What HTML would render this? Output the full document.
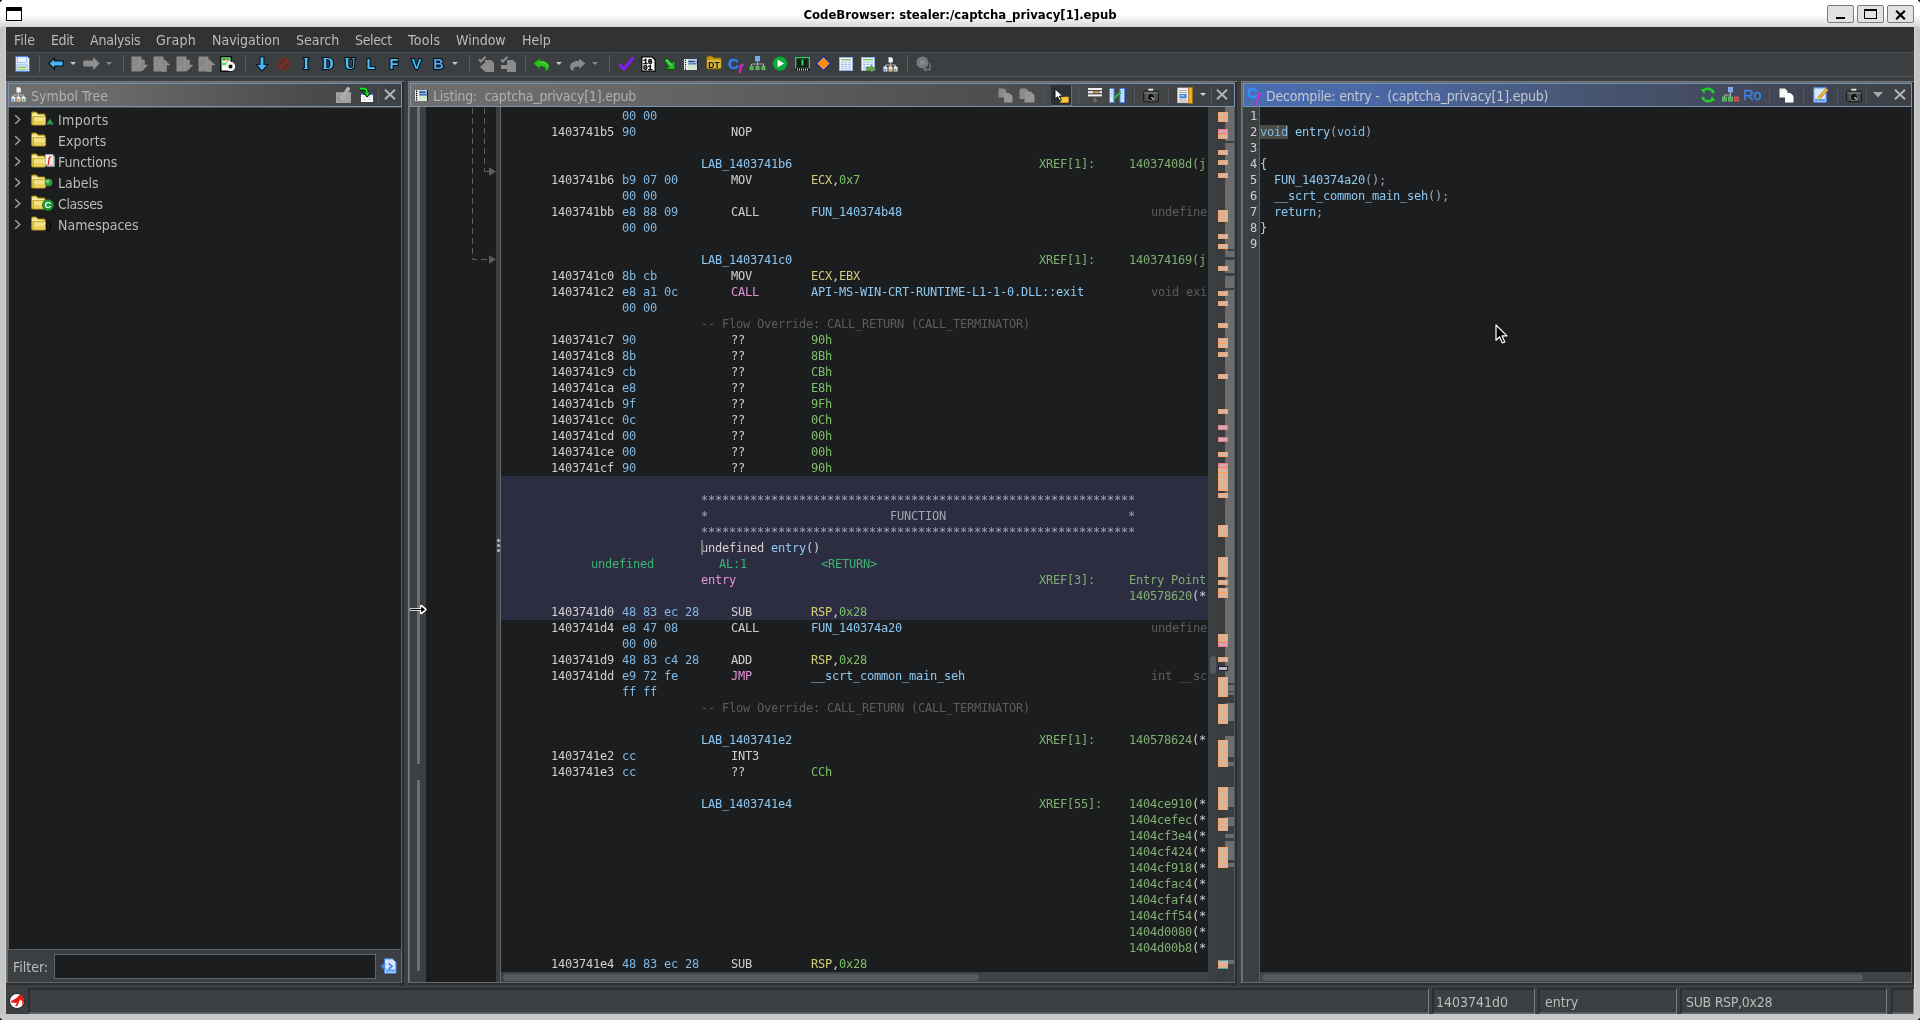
<!DOCTYPE html>
<html lang="en"><head><meta charset="utf-8"><title>CodeBrowser: stealer:/captcha_privacy[1].epub</title>
<style>
*{box-sizing:border-box;margin:0;padding:0}
html,body{width:1920px;height:1020px;overflow:hidden;background:#c8c8c8}
body{position:relative;font-family:'DejaVu Sans Condensed','DejaVu Sans','Liberation Sans',sans-serif;font-stretch:condensed;font-size:14px;color:#bbbbbb}
#root{position:absolute;left:0;top:0;width:1920px;height:1020px;overflow:hidden;will-change:transform}
.a{position:absolute}
.t{position:absolute;white-space:pre;line-height:16px}
.m{position:absolute;white-space:pre;font-family:'DejaVu Sans Mono','Liberation Mono',monospace;font-size:12px;line-height:16px;letter-spacing:-0.225px;height:16px}
.sep{position:absolute;width:1px;background:#5b5e60}
svg{position:absolute;overflow:visible}
.c-addr{color:#d0d0d0} .c-byte{color:#7fb9e6} .c-mn{color:#d0d0d0} .c-ov{color:#e193d3}
.c-reg{color:#d3cd7c} .c-sc{color:#7dbf6a} .c-lab{color:#8cc8f2} .c-xr{color:#7fae72}
.c-cm{color:#5c5c5c} .c-sep{color:#a0a4b0} .c-var{color:#3cb371} .c-fn{color:#e193d3}
.c-pl{color:#d0d0d0}
</style></head><body>
<div id="root">
<div class="a" style="left:0px;top:0px;width:1920px;height:27px;background:linear-gradient(#ffffff 0,#ffffff 15px,#d6d6d6 27px);"></div>
<div class="a" style="left:0px;top:27px;width:6px;height:993px;background:linear-gradient(90deg,#c6c6c6 0,#c6c6c6 5px,#dedede 6px);"></div>
<div class="a" style="left:1914px;top:27px;width:6px;height:993px;background:linear-gradient(90deg,#dedede 0,#c6c6c6 1px,#c6c6c6 6px);"></div>
<div class="a" style="left:0px;top:1014px;width:1920px;height:6px;background:#c8c8c8;"></div>
<div class="a" style="left:6px;top:27px;width:1908px;height:987px;background:#3c3f41;"></div>
<div class="a" style="left:0px;top:0px;width:2px;height:2px;background:radial-gradient(circle at 100% 100%,transparent 1.2px,#222 1.6px);"></div>
<div class="a" style="left:1918px;top:0px;width:2px;height:2px;background:radial-gradient(circle at 0 100%,transparent 1.2px,#222 1.6px);"></div>
<div class="a" style="left:0px;top:1018px;width:2px;height:2px;background:radial-gradient(circle at 100% 0,transparent 1.2px,#222 1.6px);"></div>
<div class="a" style="left:1918px;top:1018px;width:2px;height:2px;background:radial-gradient(circle at 0 0,transparent 1.2px,#222 1.6px);"></div>
<div class="a" style="left:6px;top:7px;width:16px;height:14px;background:#fff;border:1px solid #000;border-top:4px solid #000"></div>
<div class="t" style="left:660px;top:5px;width:600px;text-align:center;font-weight:bold;font-size:13px;color:#000;line-height:20px">CodeBrowser: stealer:/captcha_privacy[1].epub</div>
<div class="a" style="left:1827px;top:5px;width:27px;height:18px;background:#e2e2e2;border:1px solid #7c7c7c;border-radius:2px"></div>
<div class="a" style="left:1857px;top:5px;width:27px;height:18px;background:#e2e2e2;border:1px solid #7c7c7c;border-radius:2px"></div>
<div class="a" style="left:1887px;top:5px;width:27px;height:18px;background:#e2e2e2;border:1px solid #7c7c7c;border-radius:2px"></div>
<div class="a" style="left:1836px;top:17px;width:9px;height:2px;background:#000;"></div>
<div class="a" style="left:1864px;top:9px;width:13px;height:10px;border:1px solid #000;border-top:2px solid #000"></div>
<svg style="left:1895px;top:10px" width="11" height="10" viewBox="0 0 11 10"><path d="M1.2 0.8 L9.8 9.2 M9.8 0.8 L1.2 9.2" stroke="#000" stroke-width="2.2" fill="none"/></svg>
<div class="a" style="left:6px;top:27px;width:1908px;height:25px;background:#303234;"></div>
<div class="a" style="left:6px;top:52px;width:1908px;height:1px;background:#505355;"></div>
<div class="t" style="left:14px;top:30px;line-height:20px;color:#bbbbbb;letter-spacing:0px">File</div>
<div class="t" style="left:51px;top:30px;line-height:20px;color:#bbbbbb;letter-spacing:-0.4px">Edit</div>
<div class="t" style="left:90px;top:30px;line-height:20px;color:#bbbbbb;letter-spacing:-0.2px">Analysis</div>
<div class="t" style="left:156px;top:30px;line-height:20px;color:#bbbbbb;letter-spacing:0.3px">Graph</div>
<div class="t" style="left:212px;top:30px;line-height:20px;color:#bbbbbb;letter-spacing:0px">Navigation</div>
<div class="t" style="left:296px;top:30px;line-height:20px;color:#bbbbbb;letter-spacing:0px">Search</div>
<div class="t" style="left:355px;top:30px;line-height:20px;color:#bbbbbb;letter-spacing:-0.35px">Select</div>
<div class="t" style="left:408px;top:30px;line-height:20px;color:#bbbbbb;letter-spacing:0.35px">Tools</div>
<div class="t" style="left:456px;top:30px;line-height:20px;color:#bbbbbb;letter-spacing:0px">Window</div>
<div class="t" style="left:522px;top:30px;line-height:20px;color:#bbbbbb;letter-spacing:0px">Help</div>
<div class="a" style="left:6px;top:76px;width:1908px;height:1px;background:#55585a;"></div>
<svg style="left:14px;top:56px" width="16" height="16" viewBox="0 0 16 16"><path d="M1.5 0.5 H13.5 L15.5 2.5 V15.5 H1.5 Z" fill="#dfeafc" stroke="#3f78d6" stroke-width="1"/>
<rect x="3.5" y="1" width="9" height="5.5" fill="#eef4ff" stroke="#7aa5e8" stroke-width=".6"/>
<rect x="3" y="9" width="10" height="6" fill="#fff" stroke="#5a8fe0" stroke-width=".6"/>
<rect x="4" y="10.5" width="8" height="1.6" fill="#86c25a"/><rect x="4" y="12.8" width="8" height="1.4" fill="#9ccf6f"/></svg>
<div class="sep" style="left:39px;top:55px;height:18px;background:#5b5e60"></div>
<svg style="left:48px;top:57px" width="16" height="13" viewBox="0 0 16 13"><path d="M0.8 6.5 L6.5 0.8 V4 H15.2 V9 H6.5 V12.2 Z" fill="#46b6f5" stroke="#05131c" stroke-width="1.2" stroke-linejoin="round"/></svg>
<svg style="left:70px;top:62px" width="6" height="3" viewBox="0 0 6 3"><path d="M0 0 H6 L3.0 3 Z" fill="#c8c8c8"/></svg>
<svg style="left:83px;top:57px" width="17" height="13" viewBox="0 0 17 13"><path d="M16.2 6.5 L10.5 0.8 V4 H0.8 V9 H10.5 V12.2 Z" fill="#8f8f8f" stroke="#8a8a8a" stroke-width="1"/></svg>
<svg style="left:106px;top:62px" width="6" height="3" viewBox="0 0 6 3"><path d="M0 0 H6 L3.0 3 Z" fill="#8a8a8a"/></svg>
<div class="sep" style="left:123px;top:55px;height:18px;background:#5b5e60"></div>
<svg style="left:131px;top:56px" width="17" height="16" viewBox="0 0 17 16"><path d="M0.5 0.5 H10.5 V15.5 H0.5 Z" fill="#8d8d8d"/><path d="M2.5 4h3M2.5 6.5h2M2.5 9h2" stroke="#7c7c7c" stroke-width="1"/><path d="M7 1 L4.5 7 L8 9.5 L6 15" stroke="#808080" stroke-width=".8" fill="none"/><path d="M9 4 H13.5 V9 H16.8 L11.3 14.8 L5.8 9 H9 Z" fill="#8a8a8a" stroke="#9a9a9a" stroke-width=".5"/></svg>
<svg style="left:153px;top:56px" width="17" height="16" viewBox="0 0 17 16"><path d="M0.5 0.5 H10.5 V15.5 H0.5 Z" fill="#8d8d8d"/><path d="M2.5 4h3M2.5 6.5h2M2.5 9h2" stroke="#7c7c7c" stroke-width="1"/><path d="M7 1 L4.5 7 L8 9.5 L6 15" stroke="#808080" stroke-width=".8" fill="none"/><path d="M9 15.4 H13.5 V9 H16.8 L11.3 3.4 L5.8 9 H9 Z" fill="#8a8a8a" stroke="#9a9a9a" stroke-width=".5"/></svg>
<svg style="left:176px;top:56px" width="17" height="16" viewBox="0 0 17 16"><path d="M0.5 0.5 H10.5 V15.5 H0.5 Z" fill="#8d8d8d"/><path d="M2.5 4h3M2.5 6.5h2M2.5 9h2" stroke="#7c7c7c" stroke-width="1"/><path d="M7 1 L4.5 7 L8 9.5 L6 15" stroke="#808080" stroke-width=".8" fill="none"/><path d="M9 4 H13.5 V9 H16.8 L11.3 14.8 L5.8 9 H9 Z" fill="#8a8a8a" stroke="#9a9a9a" stroke-width=".5"/></svg>
<svg style="left:198px;top:56px" width="17" height="16" viewBox="0 0 17 16"><path d="M0.5 0.5 H10.5 V15.5 H0.5 Z" fill="#8d8d8d"/><path d="M2.5 4h3M2.5 6.5h2M2.5 9h2" stroke="#7c7c7c" stroke-width="1"/><path d="M7 1 L4.5 7 L8 9.5 L6 15" stroke="#808080" stroke-width=".8" fill="none"/><path d="M9 15.4 H13.5 V9 H16.8 L11.3 3.4 L5.8 9 H9 Z" fill="#8a8a8a" stroke="#9a9a9a" stroke-width=".5"/></svg>
<svg style="left:220px;top:56px" width="16" height="16" viewBox="0 0 16 16"><rect x="0.8" y="0.8" width="10.4" height="14.4" fill="#fff" stroke="#000" stroke-width="1.4"/>
<rect x="1.5" y="1.5" width="9" height="3" fill="#4fc84f"/><rect x="1.5" y="6.5" width="6" height="3" fill="#6bd66b"/>
<rect x="3" y="3" width="2" height="1.5" fill="#d04040"/><rect x="6.5" y="4.5" width="2" height="1.2" fill="#d08040"/>
<circle cx="10.5" cy="10.5" r="4" fill="#e8e8e8" stroke="#fff" stroke-width="1.4"/><rect x="8.8" y="8.8" width="3.4" height="3.4" fill="#111"/></svg>
<div class="sep" style="left:245px;top:55px;height:18px;background:#5b5e60"></div>
<svg style="left:255px;top:56px" width="14" height="16" viewBox="0 0 14 16"><path d="M5 0.8 H9 V8.5 H12.8 L7 15.2 L1.2 8.5 H5 Z" fill="#46b6f5" stroke="#05131c" stroke-width="1.1" stroke-linejoin="round"/></svg>
<svg style="left:277px;top:57px" width="14" height="14" viewBox="0 0 14 14"><circle cx="7" cy="7" r="6.6" fill="#6e2d28"/><circle cx="7" cy="7" r="4.2" fill="#55302e"/><path d="M3.2 10.8 L10.8 3.2" stroke="#7a332d" stroke-width="2.4"/></svg>
<svg style="left:300px;top:54px" width="12" height="20" viewBox="0 0 12 20"><text x="6.0" y="14.799999999999997" text-anchor="middle" font-family="'Liberation Serif','DejaVu Serif',serif" font-weight="bold" font-size="16" fill="#4dc0f8" stroke="#020a10" stroke-width="2" paint-order="stroke" stroke-linejoin="round">I</text></svg>
<svg style="left:321px;top:54px" width="14" height="20" viewBox="0 0 14 20"><text x="7.0" y="14.799999999999997" text-anchor="middle" font-family="'Liberation Serif','DejaVu Serif',serif" font-weight="bold" font-size="16" fill="#4dc0f8" stroke="#020a10" stroke-width="2" paint-order="stroke" stroke-linejoin="round">D</text></svg>
<svg style="left:343px;top:54px" width="14" height="20" viewBox="0 0 14 20"><text x="7.0" y="14.799999999999997" text-anchor="middle" font-family="'Liberation Serif','DejaVu Serif',serif" font-weight="bold" font-size="16" fill="#4dc0f8" stroke="#020a10" stroke-width="2" paint-order="stroke" stroke-linejoin="round">U</text></svg>
<svg style="left:365px;top:54px" width="12" height="20" viewBox="0 0 12 20"><text x="6.0" y="14.799999999999997" text-anchor="middle" font-family="'Liberation Sans','DejaVu Sans',sans-serif" font-weight="bold" font-size="14.5" fill="#4dc0f8" stroke="#020a10" stroke-width="2" paint-order="stroke" stroke-linejoin="round">L</text></svg>
<svg style="left:388px;top:54px" width="12" height="20" viewBox="0 0 12 20"><text x="6.0" y="14.799999999999997" text-anchor="middle" font-family="'Liberation Sans','DejaVu Sans',sans-serif" font-weight="bold" font-size="14.5" fill="#4dc0f8" stroke="#020a10" stroke-width="2" paint-order="stroke" stroke-linejoin="round">F</text></svg>
<svg style="left:410px;top:54px" width="13" height="20" viewBox="0 0 13 20"><text x="6.5" y="14.799999999999997" text-anchor="middle" font-family="'Liberation Sans','DejaVu Sans',sans-serif" font-weight="bold" font-size="14.5" fill="#28c4ff" stroke="#020a10" stroke-width="2" paint-order="stroke" stroke-linejoin="round">V</text></svg>
<svg style="left:432px;top:54px" width="13" height="20" viewBox="0 0 13 20"><text x="6.5" y="14.799999999999997" text-anchor="middle" font-family="'Liberation Sans','DejaVu Sans',sans-serif" font-weight="bold" font-size="14.5" fill="#58a8f0" stroke="#020a10" stroke-width="2" paint-order="stroke" stroke-linejoin="round">B</text></svg>
<svg style="left:452px;top:62px" width="6" height="3" viewBox="0 0 6 3"><path d="M0 0 H6 L3.0 3 Z" fill="#c8c8c8"/></svg>
<div class="sep" style="left:469px;top:55px;height:18px;background:#5b5e60"></div>
<svg style="left:478px;top:56px" width="17" height="16" viewBox="0 0 17 16"><path d="M7 4 H13 L16 7 V16 H7 Z" fill="#8a8a8a"/><path d="M1 3.5 L3 5.5 L7.5 0.8" stroke="#8c8c8c" stroke-width="2" fill="none"/><path d="M2 11 L7 6.5 V9 H12 V13 H7 V15.5 Z" fill="#909090"/></svg>
<svg style="left:500px;top:56px" width="17" height="16" viewBox="0 0 17 16"><path d="M7 4 H13 L16 7 V16 H7 Z" fill="#8a8a8a"/><path d="M1 3.5 L3 5.5 L7.5 0.8" stroke="#8c8c8c" stroke-width="2" fill="none"/><path d="M12 11 L7 6.5 V9 H1 V13 H7 V15.5 Z" fill="#909090"/></svg>
<div class="sep" style="left:525px;top:55px;height:18px;background:#5b5e60"></div>
<svg style="left:533px;top:58px" width="17" height="14" viewBox="0 0 17 14"><path d="M0.6 5.6 L6.8 0.6 V3 C11.5 2.4 16 4.8 16 9 C16 11.4 14.2 12.8 11.6 13 C13.6 11.6 13.4 8.6 6.8 8.2 V10.8 Z" fill="#2cc21e" stroke="#13800c" stroke-width=".8" stroke-linejoin="round"/><path d="M7 4 C11 3.6 14.6 5.6 14.8 8.6" stroke="#7be86e" stroke-width="1" fill="none"/></svg>
<svg style="left:556px;top:62px" width="6" height="3" viewBox="0 0 6 3"><path d="M0 0 H6 L3.0 3 Z" fill="#c8c8c8"/></svg>
<svg style="left:569px;top:58px" width="17" height="14" viewBox="0 0 17 14"><path d="M16.4 5.6 L10.2 0.6 V3 C5.5 2.4 1 4.8 1 9 C1 11.4 2.8 12.8 5.4 13 C3.4 11.6 3.6 8.6 10.2 8.2 V10.8 Z" fill="#8a8a8a"/></svg>
<svg style="left:592px;top:62px" width="6" height="3" viewBox="0 0 6 3"><path d="M0 0 H6 L3.0 3 Z" fill="#8a8a8a"/></svg>
<div class="sep" style="left:609px;top:55px;height:18px;background:#5b5e60"></div>
<svg style="left:618px;top:56px" width="16" height="16" viewBox="0 0 16 16"><path d="M2 8.8 L6 13 L14.6 2.4" stroke="#8a1af0" stroke-width="3" fill="none" stroke-linecap="round" stroke-linejoin="round"/></svg>
<svg style="left:641px;top:56px" width="15" height="16" viewBox="0 0 15 16"><path d="M0.8 0.8 H11 L14.2 4 V15.2 H0.8 Z" fill="#fff" stroke="#000" stroke-width="1.3"/><text x="2" y="7.8" font-family="'Liberation Mono',monospace" font-weight="bold" font-size="8" fill="#000" stroke="#000" stroke-width=".4" textLength="9.5" lengthAdjust="spacingAndGlyphs">10</text><text x="2" y="14" font-family="'Liberation Mono',monospace" font-weight="bold" font-size="8" fill="#000" stroke="#000" stroke-width=".4" textLength="9.5" lengthAdjust="spacingAndGlyphs">01</text></svg>
<svg style="left:663px;top:57px" width="14" height="14" viewBox="0 0 14 14"><path d="M1 3.8 L4 0.9 L9.2 6 L12 3.2 V12.6 H2.6 L5.6 9.6 Z" fill="#2cb52c" stroke="#0c4f0c" stroke-width="1" stroke-linejoin="round"/><path d="M3.5 3 L9 8.6" stroke="#8ff08f" stroke-width="1"/></svg>
<svg style="left:684px;top:59px" width="14" height="11" viewBox="0 0 14 11"><rect x="0" y="0" width="14" height="11" fill="#e9eef2"/><rect x="4" y="0.5" width="9.5" height="4" fill="#9bb6d8"/><rect x="4" y="5.5" width="9.5" height="5" fill="#cfe6cf"/><rect x="4.5" y="2" width="6" height="1" fill="#1c3a78"/><rect x="4.5" y="4.4" width="8" height="1" fill="#31508c"/><path d="M1.5 1.2v0M1.5 3.4v0M1.5 5.6v0M1.5 7.8v0M1.5 10v0" stroke="#000" stroke-width="1.3" stroke-linecap="round"/><rect x="13" y="0" width="1" height="11" fill="#222"/></svg>
<svg style="left:706px;top:55px" width="16" height="15" viewBox="0 0 16 15"><path d="M0.7 2.5 Q0.7 1 2.2 1 H6 L7.6 2.8 H14 Q15.3 2.8 15.3 4.2 V12.8 Q15.3 14 14 14 H2 Q0.7 14 0.7 12.8 Z" fill="#c09a18" stroke="#6e5606" stroke-width=".9"/><path d="M1.2 5 H14.8 V12.8 H1.2 Z" fill="#d9ba3a"/><text x="8" y="12.6" text-anchor="middle" font-family="'Liberation Sans',sans-serif" font-weight="bold" font-size="8.5" fill="#111">DT</text></svg>
<div class="a" style="left:728px;top:55px;width:12px;height:18px;line-height:18px;font-family:'Liberation Sans',sans-serif;font-weight:bold;font-size:15px;color:#2f7df2;-webkit-text-stroke:.5px #2f7df2">C</div>
<div class="a" style="left:739px;top:59px;width:8px;height:16px;line-height:16px;font-family:'Liberation Serif',serif;font-weight:bold;font-style:italic;font-size:11px;color:#f020e0;-webkit-text-stroke:.4px #f020e0">f</div>
<svg style="left:749px;top:56px" width="17" height="15" viewBox="0 0 17 15"><path d="M8.5 5 V8 M2.5 10.5 V8 H14.5 V10.5 M8.5 8 V10.5" stroke="#a8a8a8" stroke-width="1" fill="none"/><rect x="6.3" y="0.5" width="4.4" height="4.4" fill="#6ea8f0" stroke="#9cc4f8" stroke-width=".6"/><rect x="1" y="10.6" width="3.2" height="3.2" fill="#44b044" stroke="#7fd07f" stroke-width=".6"/><rect x="6.9" y="10.6" width="3.2" height="3.2" fill="#44b044" stroke="#7fd07f" stroke-width=".6"/><rect x="12.8" y="10.6" width="3.2" height="3.2" fill="#44b044" stroke="#7fd07f" stroke-width=".6"/></svg>
<svg style="left:772px;top:56px" width="16" height="16" viewBox="0 0 16 16"><circle cx="8" cy="7.6" r="7.2" fill="#11a83a" stroke="#0b7a28" stroke-width=".8"/><path d="M5.6 3.6 L12 7.6 L5.6 11.6 Z" fill="#fff"/></svg>
<svg style="left:795px;top:57px" width="15" height="14" viewBox="0 0 15 14"><rect x="0.7" y="0.7" width="13.6" height="10.6" fill="#0d0d0d" stroke="#2adf6a" stroke-width="1.2"/><rect x="2.6" y="2.6" width="3.6" height="6" fill="#1a1a1a" stroke="#3a3a3a" stroke-width=".5"/><rect x="8.8" y="2.6" width="3.6" height="6" fill="#1a1a1a" stroke="#3a3a3a" stroke-width=".5"/><rect x="6.6" y="2.5" width="1.8" height="6" fill="#2adf6a"/><rect x="0.5" y="11" width="14" height="2.6" fill="#111"/><path d="M2.5 11.5v2M4.5 11.5v2M6.5 11.5v2M8.5 11.5v2M10.5 11.5v2M12.5 11.5v2" stroke="#e8e8e8" stroke-width=".9"/></svg>
<svg style="left:816px;top:56px" width="15" height="15" viewBox="0 0 15 15"><path d="M7.5 0.6 L14.4 7.5 L7.5 14.4 L0.6 7.5 Z" fill="#ff8a00" stroke="#1a2a9a" stroke-width="1.2"/><path d="M7.5 1.9 L13.1 7.5 L7.5 13.1 L1.9 7.5 Z" fill="none" stroke="#c9c9e8" stroke-width=".5"/></svg>
<svg style="left:839px;top:57px" width="14" height="14" viewBox="0 0 14 14"><rect x="0.5" y="0.5" width="13" height="13" fill="#f4f8ff" stroke="#8fb0e0" stroke-width="1"/><rect x="2" y="2" width="10" height="1.4" fill="#7fc060"/><path d="M2 5.2h10M2 7.4h10M2 9.6h10M2 11.8h10" stroke="#9bb8e6" stroke-width="1.1"/><path d="M5.2 4.4v8M8.8 4.4v8" stroke="#f4f8ff" stroke-width=".8"/></svg>
<svg style="left:861px;top:57px" width="14" height="14" viewBox="0 0 14 14"><rect x="0.5" y="0.5" width="13" height="13" fill="#f4f8ff" stroke="#8fb0e0" stroke-width="1"/><rect x="2" y="2" width="10" height="1.4" fill="#7fc060"/><path d="M2 5.2h10M2 7.4h10M2 9.6h10M2 11.8h10" stroke="#9bb8e6" stroke-width="1.1"/><path d="M5.2 4.4v8M8.8 4.4v8" stroke="#f4f8ff" stroke-width=".8"/></svg>
<svg style="left:866px;top:65px" width="10" height="8" viewBox="0 0 10 8"><path d="M0.5 2.4 H5 V0.4 L9.6 4 L5 7.6 V5.6 H0.5 Z" fill="#6aa84a" stroke="#3f7a24" stroke-width=".7"/></svg>
<svg style="left:883px;top:57px" width="15" height="15" viewBox="0 0 15 15"><path d="M7.5 5.5 V8 M2.5 10 V8 H12.5 V10 M7.5 8 V10" stroke="#b8b8b8" stroke-width="1" fill="none"/><path d="M5.5 0.3 H8.6 L9.8 1.5 V5.4 H5.5 Z" fill="#f4f4f4"/><path d="M0.5 9.6 H3.4 L4.4 10.6 V14.6 H0.5 Z" fill="#f4f4f4"/><path d="M5.6 9.6 H8.5 L9.5 10.6 V14.6 H5.6 Z" fill="#f4f4f4"/><path d="M10.7 9.6 H13.6 L14.6 10.6 V14.6 H10.7 Z" fill="#f4f4f4"/><rect x="1.3" y="11.6" width="2" height="2.4" fill="#5a9ae8"/><rect x="6.4" y="11.6" width="2" height="2.4" fill="#f08a3c"/><rect x="11.5" y="11.6" width="2" height="2.4" fill="#48c048"/></svg>
<div class="sep" style="left:907px;top:55px;height:18px;background:#5b5e60"></div>
<svg style="left:916px;top:56px" width="16" height="16" viewBox="0 0 16 16"><circle cx="6.5" cy="6.5" r="6" fill="#777a7c"/><path d="M4.6 3.2 L10 6.5 L4.6 9.8 Z" fill="#8a8d8f"/><path d="M8 13.5 H14 V7" stroke="#777a7c" stroke-width="1.3" fill="none"/><path d="M9.8 11.4 L7.2 13.5 L9.8 15.6 Z" fill="#777a7c"/></svg>
<div class="a" style="left:6px;top:81px;width:398px;height:904px;background:#3c3f41;"></div>
<div class="a" style="left:6px;top:81px;width:398px;height:2px;background:linear-gradient(#747a7d 0,#747a7d 1px,#62676a 1px,#62676a 2px);"></div>
<div class="a" style="left:6px;top:81px;width:2px;height:904px;background:linear-gradient(90deg,#747a7d 0,#747a7d 1px,#62676a 1px,#62676a 2px);"></div>
<div class="a" style="left:402px;top:82px;width:2px;height:903px;background:#2b2d2f;"></div>
<div class="a" style="left:6px;top:983px;width:398px;height:2px;background:#2b2d2f;"></div>
<div class="a" style="left:8px;top:83px;width:394px;height:24px;border:1px solid #7a93b0;background:linear-gradient(90deg,#6e6e6e 0,#6a6a6a 25%,#4a4c4e 75%,#3d4042 100%)"></div>
<svg style="left:11px;top:87px" width="15" height="15" viewBox="0 0 15 15"><path d="M7.5 5.5 V8 M2.5 10 V8 H12.5 V10 M7.5 8 V10" stroke="#b8b8b8" stroke-width="1" fill="none"/><path d="M5.5 0.3 H8.6 L9.8 1.5 V5.4 H5.5 Z" fill="#f4f4f4"/><path d="M0.5 9.6 H3.4 L4.4 10.6 V14.6 H0.5 Z" fill="#f4f4f4"/><path d="M5.6 9.6 H8.5 L9.5 10.6 V14.6 H5.6 Z" fill="#f4f4f4"/><path d="M10.7 9.6 H13.6 L14.6 10.6 V14.6 H10.7 Z" fill="#f4f4f4"/><rect x="1.3" y="11.6" width="2" height="2.4" fill="#5a9ae8"/><rect x="6.4" y="11.6" width="2" height="2.4" fill="#f08a3c"/><rect x="11.5" y="11.6" width="2" height="2.4" fill="#48c048"/></svg>
<div class="t" style="left:31px;top:88px;color:#b0b0b0">Symbol Tree</div>
<svg style="left:336px;top:86px" width="16" height="18" viewBox="0 0 16 18"><rect x="0" y="6.2" width="15" height="10.8" fill="#a2a2a2"/><path d="M5.5 13.5 L12.2 2.8" stroke="#b4b4b4" stroke-width="3.6" stroke-linecap="round"/><path d="M6.5 12 L11.5 4" stroke="#8e8e8e" stroke-width=".8" stroke-dasharray="1.2 1"/><path d="M2.5 11 V14.2 H6.5" stroke="#8a8a8a" stroke-width="1" fill="none"/></svg>
<svg style="left:359px;top:86px" width="16" height="17" viewBox="0 0 16 17"><rect x="2" y="8" width="12" height="8" fill="#fdfdfd"/><rect x="2" y="7.6" width="12" height="1.3" fill="#3a8af0"/><path d="M3.5 11h3.5M8.5 11h4M3.5 13.6h3.5M8.5 13.6h4" stroke="#cfcfcf" stroke-width="1"/><path d="M0.5 3.4 H5.2 Q8.2 3.4 8.2 7" stroke="#000" stroke-width="2.8" fill="none"/><path d="M3.8 6.8 H12.4 L8.1 11.6 Z" fill="#000"/><path d="M0.5 2.8 H5.2 Q8 2.8 8 6.4" stroke="#12e812" stroke-width="1.9" fill="none"/><path d="M5 6.4 H11.2 L8.1 10.2 Z" fill="#12e812"/></svg>
<div class="sep" style="left:378px;top:86px;height:18px;background:#55585a"></div>
<svg style="left:384px;top:89px" width="12" height="11" viewBox="0 0 12 11"><path d="M1 0.8 L11 10.2 M11 0.8 L1 10.2" stroke="#b4b4b4" stroke-width="2" fill="none"/></svg>
<div class="a" style="left:9px;top:108px;width:392px;height:841px;background:#1c1d1e;"></div>
<div class="a" style="left:401px;top:107px;width:1px;height:843px;background:#5f6365;"></div>
<div class="a" style="left:8px;top:107px;width:1px;height:843px;background:#666a6c;"></div>
<div class="a" style="left:9px;top:107px;width:392px;height:1px;background:#4c4f51;"></div>
<div class="a" style="left:8px;top:949px;width:394px;height:1px;background:#5f6365;"></div>
<svg style="left:14px;top:114px" width="7" height="11" viewBox="0 0 7 11"><path d="M1.2 1.2 L5.8 5.5 L1.2 9.8" stroke="#b0b0b0" stroke-width="1.2" fill="none"/></svg>
<svg style="left:31px;top:111px" width="16" height="15" viewBox="0 0 16 15"><path d="M0.6 2.2 Q0.6 1 1.8 1 H5.4 L7.2 3 H13 Q14 3 14 4 V13 Q14 14 13 14 H1.8 Q0.6 14 0.6 13 Z" fill="#e6cf55" stroke="#a8880e" stroke-width=".9"/><path d="M1.2 2.4 H5.2 L6.8 4 H13.2 V5 H1.2 Z" fill="#f7ecaa"/><path d="M2.4 5.6 H14.6 V13 Q14.6 13.8 13.8 13.8 H3.2 Q2.4 13.8 2.4 13 Z" fill="#f3e387" stroke="#b8981c" stroke-width=".7"/><path d="M3 10 H14 V13.2 H3 Z" fill="#ead25c"/></svg>
<svg style="left:46px;top:118px" width="8" height="7" viewBox="0 0 8 7"><path d="M4 0.4 L7.6 6.6 H0.4 Z" fill="#2e9a50"/></svg>
<div class="t" style="left:58px;top:110px;line-height:20px;color:#bbbbbb;letter-spacing:0.33px">Imports</div>
<svg style="left:14px;top:135px" width="7" height="11" viewBox="0 0 7 11"><path d="M1.2 1.2 L5.8 5.5 L1.2 9.8" stroke="#b0b0b0" stroke-width="1.2" fill="none"/></svg>
<svg style="left:31px;top:132px" width="16" height="15" viewBox="0 0 16 15"><path d="M0.6 2.2 Q0.6 1 1.8 1 H5.4 L7.2 3 H13 Q14 3 14 4 V13 Q14 14 13 14 H1.8 Q0.6 14 0.6 13 Z" fill="#e6cf55" stroke="#a8880e" stroke-width=".9"/><path d="M1.2 2.4 H5.2 L6.8 4 H13.2 V5 H1.2 Z" fill="#f7ecaa"/><path d="M2.4 5.6 H14.6 V13 Q14.6 13.8 13.8 13.8 H3.2 Q2.4 13.8 2.4 13 Z" fill="#f3e387" stroke="#b8981c" stroke-width=".7"/><path d="M3 10 H14 V13.2 H3 Z" fill="#ead25c"/></svg>
<div class="t" style="left:58px;top:131px;line-height:20px;color:#bbbbbb;letter-spacing:0.1px">Exports</div>
<svg style="left:14px;top:156px" width="7" height="11" viewBox="0 0 7 11"><path d="M1.2 1.2 L5.8 5.5 L1.2 9.8" stroke="#b0b0b0" stroke-width="1.2" fill="none"/></svg>
<svg style="left:31px;top:153px" width="16" height="15" viewBox="0 0 16 15"><path d="M0.6 2.2 Q0.6 1 1.8 1 H5.4 L7.2 3 H13 Q14 3 14 4 V13 Q14 14 13 14 H1.8 Q0.6 14 0.6 13 Z" fill="#e6cf55" stroke="#a8880e" stroke-width=".9"/><path d="M1.2 2.4 H5.2 L6.8 4 H13.2 V5 H1.2 Z" fill="#f7ecaa"/><path d="M2.4 5.6 H14.6 V13 Q14.6 13.8 13.8 13.8 H3.2 Q2.4 13.8 2.4 13 Z" fill="#f3e387" stroke="#b8981c" stroke-width=".7"/><path d="M3 10 H14 V13.2 H3 Z" fill="#ead25c"/></svg>
<svg style="left:45px;top:154px" width="10" height="13" viewBox="0 0 10 13"><rect x="2" y="2" width="7.5" height="10.5" fill="#d8d8d8" stroke="#9a9a9a" stroke-width=".6"/><rect x="0.5" y="0.5" width="7.5" height="10.5" fill="#fafafa" stroke="#b0b0b0" stroke-width=".6"/><text x="2.4" y="9" font-family="'Liberation Serif',serif" font-style="italic" font-weight="bold" font-size="10" fill="#e01818">f</text></svg>
<div class="t" style="left:58px;top:152px;line-height:20px;color:#bbbbbb;letter-spacing:-0.1px">Functions</div>
<svg style="left:14px;top:177px" width="7" height="11" viewBox="0 0 7 11"><path d="M1.2 1.2 L5.8 5.5 L1.2 9.8" stroke="#b0b0b0" stroke-width="1.2" fill="none"/></svg>
<svg style="left:31px;top:174px" width="16" height="15" viewBox="0 0 16 15"><path d="M0.6 2.2 Q0.6 1 1.8 1 H5.4 L7.2 3 H13 Q14 3 14 4 V13 Q14 14 13 14 H1.8 Q0.6 14 0.6 13 Z" fill="#e6cf55" stroke="#a8880e" stroke-width=".9"/><path d="M1.2 2.4 H5.2 L6.8 4 H13.2 V5 H1.2 Z" fill="#f7ecaa"/><path d="M2.4 5.6 H14.6 V13 Q14.6 13.8 13.8 13.8 H3.2 Q2.4 13.8 2.4 13 Z" fill="#f3e387" stroke="#b8981c" stroke-width=".7"/><path d="M3 10 H14 V13.2 H3 Z" fill="#ead25c"/></svg>
<svg style="left:44px;top:178px" width="9" height="9" viewBox="0 0 9 9"><circle cx="4.5" cy="4.5" r="3.8" fill="#2fa03a"/><circle cx="3.6" cy="3.4" r="1.6" fill="#7fd487"/></svg>
<div class="t" style="left:58px;top:173px;line-height:20px;color:#bbbbbb;letter-spacing:0px">Labels</div>
<svg style="left:14px;top:198px" width="7" height="11" viewBox="0 0 7 11"><path d="M1.2 1.2 L5.8 5.5 L1.2 9.8" stroke="#b0b0b0" stroke-width="1.2" fill="none"/></svg>
<svg style="left:31px;top:195px" width="16" height="15" viewBox="0 0 16 15"><path d="M0.6 2.2 Q0.6 1 1.8 1 H5.4 L7.2 3 H13 Q14 3 14 4 V13 Q14 14 13 14 H1.8 Q0.6 14 0.6 13 Z" fill="#e6cf55" stroke="#a8880e" stroke-width=".9"/><path d="M1.2 2.4 H5.2 L6.8 4 H13.2 V5 H1.2 Z" fill="#f7ecaa"/><path d="M2.4 5.6 H14.6 V13 Q14.6 13.8 13.8 13.8 H3.2 Q2.4 13.8 2.4 13 Z" fill="#f3e387" stroke="#b8981c" stroke-width=".7"/><path d="M3 10 H14 V13.2 H3 Z" fill="#ead25c"/></svg>
<svg style="left:42px;top:199px" width="12" height="12" viewBox="0 0 12 12"><circle cx="6" cy="6" r="5.6" fill="#1e9a38" stroke="#0d6a22" stroke-width=".6"/><text x="6" y="9.3" text-anchor="middle" font-family="'Liberation Sans',sans-serif" font-weight="bold" font-size="9.5" fill="#fff">C</text></svg>
<div class="t" style="left:58px;top:194px;line-height:20px;color:#bbbbbb;letter-spacing:-0.4px">Classes</div>
<svg style="left:14px;top:219px" width="7" height="11" viewBox="0 0 7 11"><path d="M1.2 1.2 L5.8 5.5 L1.2 9.8" stroke="#b0b0b0" stroke-width="1.2" fill="none"/></svg>
<svg style="left:31px;top:216px" width="16" height="15" viewBox="0 0 16 15"><path d="M0.6 2.2 Q0.6 1 1.8 1 H5.4 L7.2 3 H13 Q14 3 14 4 V13 Q14 14 13 14 H1.8 Q0.6 14 0.6 13 Z" fill="#e6cf55" stroke="#a8880e" stroke-width=".9"/><path d="M1.2 2.4 H5.2 L6.8 4 H13.2 V5 H1.2 Z" fill="#f7ecaa"/><path d="M2.4 5.6 H14.6 V13 Q14.6 13.8 13.8 13.8 H3.2 Q2.4 13.8 2.4 13 Z" fill="#f3e387" stroke="#b8981c" stroke-width=".7"/><path d="M3 10 H14 V13.2 H3 Z" fill="#ead25c"/></svg>
<div class="a" style="left:45px;top:217px;width:11px;height:16px;line-height:16px;font-size:11px;letter-spacing:-0.5px;color:#000;font-family:'Liberation Sans',sans-serif">{}</div>
<div class="t" style="left:58px;top:215px;line-height:20px;color:#bbbbbb;letter-spacing:0px">Namespaces</div>
<div class="a" style="left:8px;top:951px;width:393px;height:31px;background:#3c3f41;"></div>
<div class="a" style="left:401px;top:951px;width:1px;height:32px;background:#6c7173;"></div>
<div class="a" style="left:8px;top:982px;width:394px;height:1px;background:#5f6365;"></div>
<div class="t" style="left:13px;top:957px;line-height:20px;color:#bbbbbb">Filter:</div>
<div class="a" style="left:54px;top:954px;width:322px;height:25px;background:#1c1d1e;border:1px solid #646769"></div>
<svg style="left:381px;top:958px" width="16" height="16" viewBox="0 0 16 16"><path d="M3.5 0.8 H11.5 L15 4.3 V15.2 H3.5 Z" fill="#d7e6fb" stroke="#3f7fe0" stroke-width="1"/><rect x="5" y="11.5" width="9" height="2.2" fill="#5aa0f0"/><path d="M4.4 5.4 L1 8.3 L4.4 11.2 M7.6 5.4 L11 8.3 L7.6 11.2" stroke="#4a8ae8" stroke-width="1.8" fill="none"/></svg>
<div class="a" style="left:408px;top:81px;width:829px;height:904px;background:#3c3f41;"></div>
<div class="a" style="left:408px;top:81px;width:829px;height:2px;background:linear-gradient(#747a7d 0,#747a7d 1px,#62676a 1px,#62676a 2px);"></div>
<div class="a" style="left:408px;top:81px;width:2px;height:904px;background:linear-gradient(90deg,#747a7d 0,#747a7d 1px,#62676a 1px,#62676a 2px);"></div>
<div class="a" style="left:1235px;top:82px;width:2px;height:903px;background:#2b2d2f;"></div>
<div class="a" style="left:408px;top:983px;width:829px;height:2px;background:#2b2d2f;"></div>
<div class="a" style="left:410px;top:83px;width:825px;height:24px;border:1px solid #7a93b0;background:linear-gradient(90deg,#6e6e6e 0,#6a6a6a 20%,#4c4e50 70%,#3d4042 100%)"></div>
<svg style="left:415px;top:90px" width="13" height="11" viewBox="0 0 13 11"><rect x="0" y="0" width="13" height="11" fill="#eef2f4"/><rect x="4" y="0.5" width="8" height="4.5" fill="#8fb0dc"/><rect x="4" y="5.5" width="8" height="5" fill="#cfe8cf"/><rect x="4.3" y="1.6" width="6" height="1.2" fill="#1c3a88"/><rect x="4.3" y="4.4" width="7.5" height="1.1" fill="#26478c"/><circle cx="1.6" cy="1.4" r=".8"/><circle cx="1.6" cy="3.5" r=".8"/><circle cx="1.6" cy="5.6" r=".8"/><circle cx="1.6" cy="7.7" r=".8"/><circle cx="1.6" cy="9.8" r=".8"/><rect x="12" y="0" width="1" height="11" fill="#222"/></svg>
<div class="t" style="left:433px;top:88px;color:#b0b0b0;letter-spacing:-0.21px">Listing:  captcha_privacy[1].epub</div>
<svg style="left:998px;top:88px" width="15" height="15" viewBox="0 0 15 15"><path d="M0.5 0.5 H6 L8.5 3 V9.5 H0.5 Z" fill="#8b8b8b"/><path d="M6 5 H11.5 L14.5 8 V14.5 H6 Z" fill="#959595"/></svg>
<svg style="left:1019px;top:88px" width="16" height="15" viewBox="0 0 16 15"><path d="M0.5 2 Q0.5 0.5 2 0.5 H7 L10 3.5 V11 H0.5 Z" fill="#8b8b8b"/><path d="M5.5 5 Q5.5 3.8 7 3.8 H12 L15.5 7 V14.5 H5.5 Z" fill="#959595"/></svg>
<div class="sep" style="left:1044px;top:87px;height:17px;background:#55585a"></div>
<div class="a" style="left:1051px;top:85px;width:21px;height:21px;background:#2e3133;border-right:1px solid #6a6d6f;border-bottom:1px solid #6a6d6f"></div>
<svg style="left:1054px;top:88px" width="16" height="16" viewBox="0 0 16 16"><rect x="6.5" y="9" width="8" height="5.5" fill="#f5c842" stroke="#c89a18" stroke-width=".6"/><path d="M1 0.8 V11.2 L3.6 8.8 L5.6 13 L7.4 12.1 L5.4 8.1 H8.8 Z" fill="#fff" stroke="#000" stroke-width=".9" stroke-linejoin="round"/></svg>
<div class="sep" style="left:1078px;top:87px;height:17px;background:#55585a"></div>
<svg style="left:1088px;top:88px" width="14" height="15" viewBox="0 0 14 15"><rect x="0" y="0" width="14" height="2" fill="#f2f2f2"/><rect x="0" y="3.2" width="5.5" height="2" fill="#f2f2f2"/><rect x="6.5" y="3.2" width="4" height="2" fill="#f0a030"/><rect x="11.4" y="3.2" width="2.6" height="2" fill="#f2f2f2"/><rect x="0" y="6.4" width="14" height="2" fill="#f2f2f2"/><path d="M6 9.6 H8 V12 H10 L7 15 L4 12 H6 Z" fill="#6a6a6a"/></svg>
<svg style="left:1109px;top:88px" width="16" height="15" viewBox="0 0 16 15"><rect x="0.5" y="0.5" width="4.5" height="14" fill="#dceaff" stroke="#3f86e8" stroke-width="1"/><rect x="11" y="0.5" width="4.5" height="14" fill="#dceaff" stroke="#3f86e8" stroke-width="1"/><path d="M1.5 3h2.5M1.5 5.5h2.5M1.5 8h2.5M12 3h2.5M12 5.5h2.5M12 8h2.5M12 10.5h2.5" stroke="#8ab4ee" stroke-width=".8"/><path d="M5 10.5 L11 4.5" stroke="#35b045" stroke-width="2.2" stroke-linecap="round"/></svg>
<div class="sep" style="left:1134px;top:87px;height:17px;background:#55585a"></div>
<svg style="left:1143px;top:88px" width="16" height="15" viewBox="0 0 16 15"><rect x="5" y="0.5" width="5.5" height="3" rx=".8" fill="#e0e0e0" stroke="#555" stroke-width=".6"/><rect x="0.6" y="3.2" width="14.8" height="10.6" rx="1.2" fill="#4a4c4e" stroke="#1a1a1a" stroke-width="1"/><rect x="1.4" y="4" width="13.2" height="2" fill="#6a6c6e"/><circle cx="8" cy="9" r="3.9" fill="#1c1c1c" stroke="#7a7c7e" stroke-width=".9"/><circle cx="8" cy="9" r="1.8" fill="#050505"/><path d="M8.6 9.4 L10.4 11.2" stroke="#e8e8e8" stroke-width="1.1" stroke-linecap="round"/></svg>
<div class="sep" style="left:1168px;top:87px;height:17px;background:#55585a"></div>
<svg style="left:1177px;top:87px" width="16" height="17" viewBox="0 0 16 17"><rect x="0.5" y="0.8" width="11" height="15" fill="#f2f2f2" stroke="#b8b8b8" stroke-width=".8" stroke-dasharray="1 1"/><path d="M2 3.5h8M2 5.5h8M2 12h8M2 14h8" stroke="#9a9a9a" stroke-width=".8"/><rect x="2.5" y="7" width="7" height="4" fill="#3f7fd8"/><rect x="3.5" y="8" width="4" height="1.4" fill="#a8d0f8"/><rect x="11.5" y="0.5" width="4" height="16" fill="#e8a820" stroke="#a87208" stroke-width=".6"/><path d="M13 2v0M13 4.5v0M13 7v0M13 9.5v0M13 12v0M13 14.5v0" stroke="#fce8a0" stroke-width=".9" stroke-linecap="round"/></svg>
<svg style="left:1200px;top:93px" width="6" height="3" viewBox="0 0 6 3"><path d="M0 0 H6 L3.0 3 Z" fill="#d8d8d8"/></svg>
<div class="sep" style="left:1211px;top:87px;height:17px;background:#55585a"></div>
<svg style="left:1216px;top:89px" width="12" height="11" viewBox="0 0 12 11"><path d="M1 0.8 L11 10.2 M11 0.8 L1 10.2" stroke="#b4b4b4" stroke-width="2" fill="none"/></svg>
<div class="a" style="left:410px;top:107px;width:16px;height:876px;background:#3c3f41;"></div>
<div class="a" style="left:426px;top:107px;width:70px;height:876px;background:#1c1d1e;"></div>
<div class="a" style="left:496px;top:107px;width:5px;height:876px;background:#3c3f41;"></div>
<div class="a" style="left:500px;top:107px;width:1px;height:876px;background:#676767;"></div>
<div class="a" style="left:501px;top:107px;width:707px;height:865px;background:#1c1d1e;"></div>
<div class="a" style="left:417px;top:107px;width:3px;height:657px;background:#6e6e6e;"></div>
<div class="a" style="left:417px;top:780px;width:3px;height:191px;background:#6e6e6e;"></div>
<div class="a" style="left:501px;top:476px;width:707px;height:144px;background:#2d2d41;"></div>
<div class="a" style="left:496.5px;top:539px;width:3px;height:3px;border-radius:50%;background:#bdbdbd"></div>
<div class="a" style="left:496.5px;top:544px;width:3px;height:3px;border-radius:50%;background:#bdbdbd"></div>
<div class="a" style="left:496.5px;top:549px;width:3px;height:3px;border-radius:50%;background:#bdbdbd"></div>
<svg style="left:460px;top:107px" width="40" height="170" viewBox="0 0 40 170"><path d="M12.5 1 V152.5 H29" stroke="#5e5e5e" stroke-width="1" fill="none" stroke-dasharray="6 4"/><path d="M24.5 1 V58" stroke="#5e5e5e" stroke-width="1" fill="none" stroke-dasharray="6 4"/><path d="M24.5 61 V64.5 H30" stroke="#5e5e5e" stroke-width="1" fill="none"/><path d="M29 60.2 L36 64.5 L29 68.8 Z M29 148.2 L36 152.5 L29 156.8 Z" fill="#5e5e5e"/></svg>
<div class="m c-byte" style="left:622px;top:108px">00 00</div>
<div class="m c-addr" style="left:551px;top:124px">1403741b5</div>
<div class="m c-byte" style="left:622px;top:124px">90</div>
<div class="m c-mn" style="left:731px;top:124px">NOP</div>
<div class="m c-lab" style="left:701px;top:156px">LAB_1403741b6</div>
<div class="m c-xr" style="left:1039px;top:156px">XREF[1]:</div>
<div class="m" style="left:1129px;top:156px;width:78px;overflow:hidden"><span class="c-xr">14037408d</span><span class="c-xr">(j</span></div>
<div class="m c-addr" style="left:551px;top:172px">1403741b6</div>
<div class="m c-byte" style="left:622px;top:172px">b9 07 00</div>
<div class="m c-mn" style="left:731px;top:172px">MOV</div>
<div class="m" style="left:811px;top:172px"><span class="c-reg">ECX</span><span class="c-pl">,</span><span class="c-sc">0x7</span></div>
<div class="m c-byte" style="left:622px;top:188px">00 00</div>
<div class="m c-addr" style="left:551px;top:204px">1403741bb</div>
<div class="m c-byte" style="left:622px;top:204px">e8 88 09</div>
<div class="m c-mn" style="left:731px;top:204px">CALL</div>
<div class="m" style="left:811px;top:204px"><span class="c-lab">FUN_140374b48</span></div>
<div class="m c-cm" style="left:1151px;top:204px;width:56px;overflow:hidden">undefined FUN_140374b48()</div>
<div class="m c-byte" style="left:622px;top:220px">00 00</div>
<div class="m c-lab" style="left:701px;top:252px">LAB_1403741c0</div>
<div class="m c-xr" style="left:1039px;top:252px">XREF[1]:</div>
<div class="m" style="left:1129px;top:252px;width:78px;overflow:hidden"><span class="c-xr">140374169</span><span class="c-xr">(j</span></div>
<div class="m c-addr" style="left:551px;top:268px">1403741c0</div>
<div class="m c-byte" style="left:622px;top:268px">8b cb</div>
<div class="m c-mn" style="left:731px;top:268px">MOV</div>
<div class="m" style="left:811px;top:268px"><span class="c-reg">ECX</span><span class="c-pl">,</span><span class="c-reg">EBX</span></div>
<div class="m c-addr" style="left:551px;top:284px">1403741c2</div>
<div class="m c-byte" style="left:622px;top:284px">e8 a1 0c</div>
<div class="m c-ov" style="left:731px;top:284px">CALL</div>
<div class="m" style="left:811px;top:284px"><span class="c-lab">API-MS-WIN-CRT-RUNTIME-L1-1-0.DLL::exit</span></div>
<div class="m c-cm" style="left:1151px;top:284px;width:56px;overflow:hidden">void exit(int _Code)</div>
<div class="m c-byte" style="left:622px;top:300px">00 00</div>
<div class="m c-cm" style="left:701px;top:316px">-- Flow Override: CALL_RETURN (CALL_TERMINATOR)</div>
<div class="m c-addr" style="left:551px;top:332px">1403741c7</div>
<div class="m c-byte" style="left:622px;top:332px">90</div>
<div class="m c-mn" style="left:731px;top:332px">??</div>
<div class="m" style="left:811px;top:332px"><span class="c-sc">90h</span></div>
<div class="m c-addr" style="left:551px;top:348px">1403741c8</div>
<div class="m c-byte" style="left:622px;top:348px">8b</div>
<div class="m c-mn" style="left:731px;top:348px">??</div>
<div class="m" style="left:811px;top:348px"><span class="c-sc">8Bh</span></div>
<div class="m c-addr" style="left:551px;top:364px">1403741c9</div>
<div class="m c-byte" style="left:622px;top:364px">cb</div>
<div class="m c-mn" style="left:731px;top:364px">??</div>
<div class="m" style="left:811px;top:364px"><span class="c-sc">CBh</span></div>
<div class="m c-addr" style="left:551px;top:380px">1403741ca</div>
<div class="m c-byte" style="left:622px;top:380px">e8</div>
<div class="m c-mn" style="left:731px;top:380px">??</div>
<div class="m" style="left:811px;top:380px"><span class="c-sc">E8h</span></div>
<div class="m c-addr" style="left:551px;top:396px">1403741cb</div>
<div class="m c-byte" style="left:622px;top:396px">9f</div>
<div class="m c-mn" style="left:731px;top:396px">??</div>
<div class="m" style="left:811px;top:396px"><span class="c-sc">9Fh</span></div>
<div class="m c-addr" style="left:551px;top:412px">1403741cc</div>
<div class="m c-byte" style="left:622px;top:412px">0c</div>
<div class="m c-mn" style="left:731px;top:412px">??</div>
<div class="m" style="left:811px;top:412px"><span class="c-sc">0Ch</span></div>
<div class="m c-addr" style="left:551px;top:428px">1403741cd</div>
<div class="m c-byte" style="left:622px;top:428px">00</div>
<div class="m c-mn" style="left:731px;top:428px">??</div>
<div class="m" style="left:811px;top:428px"><span class="c-sc">00h</span></div>
<div class="m c-addr" style="left:551px;top:444px">1403741ce</div>
<div class="m c-byte" style="left:622px;top:444px">00</div>
<div class="m c-mn" style="left:731px;top:444px">??</div>
<div class="m" style="left:811px;top:444px"><span class="c-sc">00h</span></div>
<div class="m c-addr" style="left:551px;top:460px">1403741cf</div>
<div class="m c-byte" style="left:622px;top:460px">90</div>
<div class="m c-mn" style="left:731px;top:460px">??</div>
<div class="m" style="left:811px;top:460px"><span class="c-sc">90h</span></div>
<div class="m c-sep" style="left:701px;top:492px">**************************************************************</div>
<div class="m c-sep" style="left:701px;top:508px">*                          FUNCTION                          *</div>
<div class="m c-sep" style="left:701px;top:524px">**************************************************************</div>
<div class="m" style="left:701px;top:540px"><span class="c-pl">undefined </span><span class="c-lab">entry</span><span class="c-pl">()</span></div>
<div class="a" style="left:701px;top:540px;width:2px;height:15px;background:#777777;"></div>
<div class="m c-var" style="left:591px;top:556px">undefined</div>
<div class="m c-var" style="left:719px;top:556px">AL:1</div>
<div class="m c-var" style="left:821px;top:556px">&lt;RETURN&gt;</div>
<div class="m c-fn" style="left:701px;top:572px">entry</div>
<div class="m c-xr" style="left:1039px;top:572px">XREF[3]:</div>
<div class="m c-xr" style="left:1129px;top:572px">Entry Point</div>
<div class="m" style="left:1129px;top:588px;width:78px;overflow:hidden"><span class="c-xr">140578620</span><span class="c-pl">(*</span></div>
<div class="m c-addr" style="left:551px;top:604px">1403741d0</div>
<div class="m c-byte" style="left:622px;top:604px">48 83 ec 28</div>
<div class="m c-mn" style="left:731px;top:604px">SUB</div>
<div class="m" style="left:811px;top:604px"><span class="c-reg">RSP</span><span class="c-pl">,</span><span class="c-sc">0x28</span></div>
<div class="m c-addr" style="left:551px;top:620px">1403741d4</div>
<div class="m c-byte" style="left:622px;top:620px">e8 47 08</div>
<div class="m c-mn" style="left:731px;top:620px">CALL</div>
<div class="m" style="left:811px;top:620px"><span class="c-lab">FUN_140374a20</span></div>
<div class="m c-cm" style="left:1151px;top:620px;width:56px;overflow:hidden">undefined FUN_140374a20()</div>
<div class="m c-byte" style="left:622px;top:636px">00 00</div>
<div class="m c-addr" style="left:551px;top:652px">1403741d9</div>
<div class="m c-byte" style="left:622px;top:652px">48 83 c4 28</div>
<div class="m c-mn" style="left:731px;top:652px">ADD</div>
<div class="m" style="left:811px;top:652px"><span class="c-reg">RSP</span><span class="c-pl">,</span><span class="c-sc">0x28</span></div>
<div class="m c-addr" style="left:551px;top:668px">1403741dd</div>
<div class="m c-byte" style="left:622px;top:668px">e9 72 fe</div>
<div class="m c-ov" style="left:731px;top:668px">JMP</div>
<div class="m" style="left:811px;top:668px"><span class="c-lab">__scrt_common_main_seh</span></div>
<div class="m c-cm" style="left:1151px;top:668px;width:56px;overflow:hidden">int __scrt_common_main_seh(void)</div>
<div class="m c-byte" style="left:622px;top:684px">ff ff</div>
<div class="m c-cm" style="left:701px;top:700px">-- Flow Override: CALL_RETURN (CALL_TERMINATOR)</div>
<div class="m c-lab" style="left:701px;top:732px">LAB_1403741e2</div>
<div class="m c-xr" style="left:1039px;top:732px">XREF[1]:</div>
<div class="m" style="left:1129px;top:732px;width:78px;overflow:hidden"><span class="c-xr">140578624</span><span class="c-pl">(*</span></div>
<div class="m c-addr" style="left:551px;top:748px">1403741e2</div>
<div class="m c-byte" style="left:622px;top:748px">cc</div>
<div class="m c-mn" style="left:731px;top:748px">INT3</div>
<div class="m c-addr" style="left:551px;top:764px">1403741e3</div>
<div class="m c-byte" style="left:622px;top:764px">cc</div>
<div class="m c-mn" style="left:731px;top:764px">??</div>
<div class="m" style="left:811px;top:764px"><span class="c-sc">CCh</span></div>
<div class="m c-lab" style="left:701px;top:796px">LAB_1403741e4</div>
<div class="m c-xr" style="left:1039px;top:796px">XREF[55]:</div>
<div class="m" style="left:1129px;top:796px;width:78px;overflow:hidden"><span class="c-xr">1404ce910</span><span class="c-pl">(*</span></div>
<div class="m" style="left:1129px;top:812px;width:78px;overflow:hidden"><span class="c-xr">1404cefec</span><span class="c-pl">(*</span></div>
<div class="m" style="left:1129px;top:828px;width:78px;overflow:hidden"><span class="c-xr">1404cf3e4</span><span class="c-pl">(*</span></div>
<div class="m" style="left:1129px;top:844px;width:78px;overflow:hidden"><span class="c-xr">1404cf424</span><span class="c-pl">(*</span></div>
<div class="m" style="left:1129px;top:860px;width:78px;overflow:hidden"><span class="c-xr">1404cf918</span><span class="c-pl">(*</span></div>
<div class="m" style="left:1129px;top:876px;width:78px;overflow:hidden"><span class="c-xr">1404cfac4</span><span class="c-pl">(*</span></div>
<div class="m" style="left:1129px;top:892px;width:78px;overflow:hidden"><span class="c-xr">1404cfaf4</span><span class="c-pl">(*</span></div>
<div class="m" style="left:1129px;top:908px;width:78px;overflow:hidden"><span class="c-xr">1404cff54</span><span class="c-pl">(*</span></div>
<div class="m" style="left:1129px;top:924px;width:78px;overflow:hidden"><span class="c-xr">1404d0080</span><span class="c-pl">(*</span></div>
<div class="m" style="left:1129px;top:940px;width:78px;overflow:hidden"><span class="c-xr">1404d00b8</span><span class="c-pl">(*</span></div>
<div class="m c-addr" style="left:551px;top:956px">1403741e4</div>
<div class="m c-byte" style="left:622px;top:956px">48 83 ec 28</div>
<div class="m c-mn" style="left:731px;top:956px">SUB</div>
<div class="m" style="left:811px;top:956px"><span class="c-reg">RSP</span><span class="c-pl">,</span><span class="c-sc">0x28</span></div>
<div class="a" style="left:501px;top:972px;width:707px;height:10px;background:#3f4244;"></div>
<div class="a" style="left:503px;top:974px;width:476px;height:7px;border-radius:4px;background:#565a5c"></div>
<div class="a" style="left:1208px;top:107px;width:9px;height:876px;background:#3c3f41;"></div>
<div class="a" style="left:1210px;top:656px;width:6px;height:18px;border-radius:3px;background:#565a5c"></div>
<div class="a" style="left:1217px;top:107px;width:8px;height:876px;background:#393c3e;"></div>
<div class="a" style="left:1225px;top:107px;width:9px;height:876px;background:#3c3f41;"></div>
<div class="a" style="left:1234px;top:107px;width:1px;height:876px;background:#55585a;"></div>
<div class="a" style="left:1225px;top:107px;width:9px;height:588px;background:#6c6c6c;"></div>
<div class="a" style="left:1225px;top:141px;width:9px;height:2px;background:#3c3f41;"></div>
<div class="a" style="left:1228px;top:249px;width:6px;height:2px;background:#3c3f41;"></div>
<div class="a" style="left:1225px;top:257px;width:9px;height:3px;background:#3c3f41;"></div>
<div class="a" style="left:1225px;top:273px;width:9px;height:3px;background:#3c3f41;"></div>
<div class="a" style="left:1225px;top:288px;width:9px;height:2px;background:#3c3f41;"></div>
<div class="a" style="left:1228px;top:683px;width:6px;height:2px;background:#3c3f41;"></div>
<div class="a" style="left:1228px;top:691px;width:6px;height:1px;background:#3c3f41;"></div>
<div class="a" style="left:1225px;top:703px;width:9px;height:18px;background:#6c6c6c;"></div>
<div class="a" style="left:1225px;top:736px;width:9px;height:30px;background:#6c6c6c;"></div>
<div class="a" style="left:1228px;top:757px;width:6px;height:5px;background:#3c3f41;"></div>
<div class="a" style="left:1225px;top:787px;width:9px;height:20px;background:#6c6c6c;"></div>
<div class="a" style="left:1225px;top:817px;width:9px;height:9px;background:#6c6c6c;"></div>
<div class="a" style="left:1225px;top:834px;width:9px;height:4px;background:#6c6c6c;"></div>
<div class="a" style="left:1225px;top:841px;width:9px;height:19px;background:#6c6c6c;"></div>
<div class="a" style="left:1225px;top:863px;width:9px;height:4px;background:#6c6c6c;"></div>
<div class="a" style="left:1228px;top:960px;width:6px;height:4px;background:#6c6c6c;"></div>
<div class="a" style="left:1218px;top:150px;width:10px;height:5px;background:#d4b6a6;border:1px solid #f6a56a"></div>
<div class="a" style="left:1218px;top:160px;width:10px;height:5px;background:#d4b6a6;border:1px solid #f6a56a"></div>
<div class="a" style="left:1218px;top:173px;width:10px;height:5px;background:#d4b6a6;border:1px solid #f6a56a"></div>
<div class="a" style="left:1218px;top:234px;width:10px;height:5px;background:#d4b6a6;border:1px solid #f6a56a"></div>
<div class="a" style="left:1218px;top:244px;width:10px;height:5px;background:#d4b6a6;border:1px solid #f6a56a"></div>
<div class="a" style="left:1218px;top:266px;width:10px;height:5px;background:#d4b6a6;border:1px solid #f6a56a"></div>
<div class="a" style="left:1218px;top:291px;width:10px;height:5px;background:#d4b6a6;border:1px solid #f6a56a"></div>
<div class="a" style="left:1218px;top:301px;width:10px;height:5px;background:#d4b6a6;border:1px solid #f6a56a"></div>
<div class="a" style="left:1218px;top:323px;width:10px;height:5px;background:#d4b6a6;border:1px solid #f6a56a"></div>
<div class="a" style="left:1218px;top:352px;width:10px;height:5px;background:#d4b6a6;border:1px solid #f6a56a"></div>
<div class="a" style="left:1218px;top:374px;width:10px;height:5px;background:#d4b6a6;border:1px solid #f6a56a"></div>
<div class="a" style="left:1218px;top:409px;width:10px;height:5px;background:#d4b6a6;border:1px solid #f6a56a"></div>
<div class="a" style="left:1218px;top:452px;width:10px;height:5px;background:#d4b6a6;border:1px solid #f6a56a"></div>
<div class="a" style="left:1218px;top:493px;width:10px;height:5px;background:#d4b6a6;border:1px solid #f6a56a"></div>
<div class="a" style="left:1218px;top:580px;width:10px;height:5px;background:#d4b6a6;border:1px solid #f6a56a"></div>
<div class="a" style="left:1218px;top:657px;width:10px;height:5px;background:#d4b6a6;border:1px solid #f6a56a"></div>
<div class="a" style="left:1218px;top:112px;width:10px;height:5px;background:#d4b6a6;border:1px solid #f6a56a"></div>
<div class="a" style="left:1218px;top:117px;width:10px;height:5px;background:#d4b6a6;border:1px solid #f6a56a"></div>
<div class="a" style="left:1218px;top:338px;width:10px;height:5px;background:#d4b6a6;border:1px solid #f6a56a"></div>
<div class="a" style="left:1218px;top:343px;width:10px;height:5px;background:#d4b6a6;border:1px solid #f6a56a"></div>
<div class="a" style="left:1218px;top:588px;width:10px;height:5px;background:#d4b6a6;border:1px solid #f6a56a"></div>
<div class="a" style="left:1218px;top:593px;width:10px;height:5px;background:#d4b6a6;border:1px solid #f6a56a"></div>
<div class="a" style="left:1218px;top:129px;width:10px;height:5px;background:#d8a8b0;border:1px solid #ea7f8c"></div>
<div class="a" style="left:1218px;top:134px;width:10px;height:5px;background:#d4b6a6;border:1px solid #f6a56a"></div>
<div class="a" style="left:1218px;top:210px;width:10px;height:12px;border:1px solid #f6a56a;background:repeating-linear-gradient(#d4b6a6 0,#d4b6a6 3px,#f6a56a 3px,#f6a56a 4px)"></div>
<div class="a" style="left:1218px;top:425px;width:10px;height:5px;background:#d8a8b0;border:1px solid #ea7f8c"></div>
<div class="a" style="left:1218px;top:437px;width:10px;height:5px;background:#d8a8b0;border:1px solid #ea7f8c"></div>
<div class="a" style="left:1218px;top:463px;width:10px;height:5px;background:#d8a8b0;border:1px solid #ea7f8c"></div>
<div class="a" style="left:1218px;top:468px;width:10px;height:5px;background:#d4b6a6;border:1px solid #f6a56a"></div>
<div class="a" style="left:1218px;top:473px;width:10px;height:18px;border:1px solid #f6a56a;background:repeating-linear-gradient(#d4b6a6 0,#d4b6a6 3px,#f6a56a 3px,#f6a56a 4px)"></div>
<div class="a" style="left:1218px;top:525px;width:10px;height:12px;border:1px solid #f6a56a;background:repeating-linear-gradient(#d4b6a6 0,#d4b6a6 3px,#f6a56a 3px,#f6a56a 4px)"></div>
<div class="a" style="left:1218px;top:557px;width:10px;height:20px;border:1px solid #f6a56a;background:repeating-linear-gradient(#d4b6a6 0,#d4b6a6 3px,#f6a56a 3px,#f6a56a 4px)"></div>
<div class="a" style="left:1218px;top:634px;width:10px;height:8px;border:1px solid #f6a56a;background:repeating-linear-gradient(#d4b6a6 0,#d4b6a6 3px,#f6a56a 3px,#f6a56a 4px)"></div>
<div class="a" style="left:1218px;top:642px;width:10px;height:5px;background:#d8a8b0;border:1px solid #ea7f8c"></div>
<div class="a" style="left:1218px;top:666px;width:10px;height:5px;background:#b8b8c2;border:1px solid #20203a"></div>
<div class="a" style="left:1218px;top:677px;width:10px;height:20px;border:1px solid #f6a56a;background:repeating-linear-gradient(#d4b6a6 0,#d4b6a6 3px,#f6a56a 3px,#f6a56a 4px)"></div>
<div class="a" style="left:1218px;top:704px;width:10px;height:20px;border:1px solid #f6a56a;background:repeating-linear-gradient(#d4b6a6 0,#d4b6a6 3px,#f6a56a 3px,#f6a56a 4px)"></div>
<div class="a" style="left:1218px;top:740px;width:10px;height:27px;border:1px solid #f6a56a;background:repeating-linear-gradient(#d4b6a6 0,#d4b6a6 3px,#f6a56a 3px,#f6a56a 4px)"></div>
<div class="a" style="left:1218px;top:787px;width:10px;height:23px;border:1px solid #f6a56a;background:repeating-linear-gradient(#d4b6a6 0,#d4b6a6 3px,#f6a56a 3px,#f6a56a 4px)"></div>
<div class="a" style="left:1218px;top:818px;width:10px;height:13px;border:1px solid #f6a56a;background:repeating-linear-gradient(#d4b6a6 0,#d4b6a6 3px,#f6a56a 3px,#f6a56a 4px)"></div>
<div class="a" style="left:1218px;top:847px;width:10px;height:21px;border:1px solid #f6a56a;background:repeating-linear-gradient(#d4b6a6 0,#d4b6a6 3px,#f6a56a 3px,#f6a56a 4px)"></div>
<div class="a" style="left:1218px;top:960px;width:10px;height:9px;background:#d4b6a6;border:1px solid #f6a56a;border-top-color:#4aa0a8;border-bottom-color:#4aa0a8"></div>
<div class="a" style="left:1219px;top:965px;width:8px;height:1px;background:#f6a56a;"></div>
<div class="a" style="left:410px;top:982px;width:825px;height:1px;background:#686b6d;"></div>
<div class="a" style="left:1241px;top:81px;width:673px;height:904px;background:#3c3f41;"></div>
<div class="a" style="left:1241px;top:81px;width:673px;height:2px;background:linear-gradient(#747a7d 0,#747a7d 1px,#62676a 1px,#62676a 2px);"></div>
<div class="a" style="left:1241px;top:81px;width:2px;height:904px;background:linear-gradient(90deg,#747a7d 0,#747a7d 1px,#62676a 1px,#62676a 2px);"></div>
<div class="a" style="left:1912px;top:82px;width:2px;height:903px;background:#2b2d2f;"></div>
<div class="a" style="left:1241px;top:983px;width:673px;height:2px;background:#2b2d2f;"></div>
<div class="a" style="left:1243px;top:83px;width:669px;height:24px;border:1px solid #7a93b0;background:linear-gradient(90deg,#4a6db2 0,#4a66a0 25%,#475674 50%,#42485a 75%,#3d4044 100%)"></div>
<div class="a" style="left:1247px;top:84px;width:12px;height:18px;line-height:18px;font-family:'Liberation Sans',sans-serif;font-weight:bold;font-size:15px;color:#3a8cff;-webkit-text-stroke:.5px #3a8cff">C</div>
<div class="a" style="left:1256px;top:90px;width:8px;height:16px;line-height:16px;font-family:'Liberation Serif',serif;font-weight:bold;font-style:italic;font-size:12px;color:#f020e0">f</div>
<div class="t" style="left:1266px;top:88px;color:#c4c8d0;letter-spacing:-0.2px">Decompile: entry -  (captcha_privacy[1].epub)</div>
<svg style="left:1700px;top:87px" width="16" height="16" viewBox="0 0 16 16"><path d="M13.6 6.2 A6 6 0 0 0 3 4.2" stroke="#27c827" stroke-width="2.6" fill="none"/><path d="M0.6 2.2 L5.6 1.4 L4.2 7 Z" fill="#27c827"/><path d="M2.4 9.8 A6 6 0 0 0 13 11.8" stroke="#27c827" stroke-width="2.6" fill="none"/><path d="M15.4 13.8 L10.4 14.6 L11.8 9 Z" fill="#27c827"/></svg>
<svg style="left:1722px;top:87px" width="17" height="15" viewBox="0 0 17 15"><path d="M8.5 5 V8 H2.5 V10.5 M8.5 8 V10.5" stroke="#b0b0b0" stroke-width="1" fill="none"/><rect x="6.3" y="0.5" width="4.4" height="4.4" fill="#6ea8f0" stroke="#9cc4f8" stroke-width=".6"/><rect x="0.5" y="10" width="4" height="4" fill="#44b044" stroke="#7fd07f" stroke-width=".6"/><rect x="6.5" y="10" width="4" height="4" fill="#44b044" stroke="#7fd07f" stroke-width=".6"/><rect x="12.5" y="10" width="4" height="4" fill="#e03030" stroke="#f07070" stroke-width=".6"/></svg>
<div class="a" style="left:1743px;top:85px;width:20px;height:20px;line-height:20px;font-family:'Liberation Sans',sans-serif;font-size:15px;letter-spacing:-0.6px;color:#3a86e8;-webkit-text-stroke:.3px #3a86e8">Ro</div>
<div class="sep" style="left:1769px;top:87px;height:17px;background:#55585a"></div>
<svg style="left:1779px;top:88px" width="15" height="15" viewBox="0 0 15 15"><path d="M0.5 0.5 H6 L8.5 3 V9.5 H0.5 Z" fill="#f6f6f6"/><path d="M6 5 H11.5 L14.5 8 V14.5 H6 Z" fill="#ffffff"/></svg>
<div class="sep" style="left:1803px;top:87px;height:17px;background:#55585a"></div>
<svg style="left:1813px;top:87px" width="16" height="16" viewBox="0 0 16 16"><rect x="0.8" y="0.8" width="12.4" height="14.4" fill="#dce9fb" stroke="#4a8ae8" stroke-width="1.2"/><rect x="2" y="12" width="10" height="2" fill="#5aa0f0"/><path d="M13.2 1.2 L15.2 3 L7 12 L4.2 13 L5 10.2 Z" fill="#f2b63c" stroke="#b07818" stroke-width=".7"/><path d="M5 10.2 L4.2 13 L7 12 Z" fill="#f5dcb0"/></svg>
<div class="sep" style="left:1837px;top:87px;height:17px;background:#55585a"></div>
<svg style="left:1846px;top:88px" width="16" height="15" viewBox="0 0 16 15"><rect x="5" y="0.5" width="5.5" height="3" rx=".8" fill="#e0e0e0" stroke="#555" stroke-width=".6"/><rect x="0.6" y="3.2" width="14.8" height="10.6" rx="1.2" fill="#4a4c4e" stroke="#1a1a1a" stroke-width="1"/><rect x="1.4" y="4" width="13.2" height="2" fill="#6a6c6e"/><circle cx="8" cy="9" r="3.9" fill="#1c1c1c" stroke="#7a7c7e" stroke-width=".9"/><circle cx="8" cy="9" r="1.8" fill="#050505"/><path d="M8.6 9.4 L10.4 11.2" stroke="#e8e8e8" stroke-width="1.1" stroke-linecap="round"/></svg>
<div class="sep" style="left:1866px;top:87px;height:17px;background:#55585a"></div>
<svg style="left:1873px;top:92px" width="10" height="6" viewBox="0 0 10 6"><path d="M0 0 H10 L5 5.6 Z" fill="#a8a8a8"/></svg>
<svg style="left:1894px;top:89px" width="12" height="11" viewBox="0 0 12 11"><path d="M1 0.8 L11 10.2 M11 0.8 L1 10.2" stroke="#b4b4b4" stroke-width="2" fill="none"/></svg>
<div class="a" style="left:1244px;top:107px;width:15px;height:876px;background:#3c3f41;"></div>
<div class="a" style="left:1259px;top:107px;width:1px;height:876px;background:#5c5f61;"></div>
<div class="a" style="left:1260px;top:107px;width:651px;height:865px;background:#1c1d1e;"></div>
<div class="a" style="left:1911px;top:107px;width:1px;height:876px;background:#5c5f61;"></div>
<div class="m c-pl" style="left:1250px;top:108px;letter-spacing:0">1</div>
<div class="m c-pl" style="left:1250px;top:124px;letter-spacing:0">2</div>
<div class="m c-pl" style="left:1250px;top:140px;letter-spacing:0">3</div>
<div class="m c-pl" style="left:1250px;top:156px;letter-spacing:0">4</div>
<div class="m c-pl" style="left:1250px;top:172px;letter-spacing:0">5</div>
<div class="m c-pl" style="left:1250px;top:188px;letter-spacing:0">6</div>
<div class="m c-pl" style="left:1250px;top:204px;letter-spacing:0">7</div>
<div class="m c-pl" style="left:1250px;top:220px;letter-spacing:0">8</div>
<div class="m c-pl" style="left:1250px;top:236px;letter-spacing:0">9</div>
<div class="a" style="left:1260px;top:125px;width:28px;height:14px;background:#4b4b44;"></div>
<div class="m" style="left:1260px;top:124px"><span class="c-byte">void</span> <span class="c-lab">entry</span><span class="c-sep">(</span><span class="c-byte">void</span><span class="c-sep">)</span></div>
<div class="m" style="left:1260px;top:156px"><span class="c-pl">{</span></div>
<div class="m" style="left:1260px;top:172px">  <span class="c-lab">FUN_140374a20</span><span class="c-sep">();</span></div>
<div class="m" style="left:1260px;top:188px">  <span class="c-lab">__scrt_common_main_seh</span><span class="c-sep">();</span></div>
<div class="m" style="left:1260px;top:204px">  <span class="c-lab">return</span><span class="c-sep">;</span></div>
<div class="m" style="left:1260px;top:220px"><span class="c-pl">}</span></div>
<div class="a" style="left:1260px;top:972px;width:651px;height:10px;background:#3f4244;"></div>
<div class="a" style="left:1262px;top:974px;width:601px;height:7px;border-radius:4px;background:#565a5c"></div>
<div class="a" style="left:1243px;top:982px;width:669px;height:1px;background:#686b6d;"></div>
<svg style="left:1495px;top:324px" width="13" height="20" viewBox="0 0 13 20"><path d="M1 1 V16.2 L4.6 12.8 L7.4 19 L9.8 17.9 L7.1 11.9 H12 Z" fill="#000" stroke="#fff" stroke-width="1.2" stroke-linejoin="round"/></svg>
<svg style="left:409px;top:604px" width="19" height="12" viewBox="0 0 19 12"><path d="M1.8 5.5 H12.2 V2 L16.4 5.5 L12.2 9 V5.5" fill="#000" stroke="#fff" stroke-width="2.6" stroke-linejoin="round" stroke-linecap="round"/><path d="M1.8 5.5 H12.2" stroke="#000" stroke-width="1" stroke-linecap="round"/><path d="M12.2 2.4 L16 5.5 L12.2 8.6 Z" fill="#000"/></svg>
<div class="a" style="left:6px;top:985px;width:1908px;height:29px;background:#3c3f41;"></div>
<svg style="left:9px;top:993px" width="16" height="16" viewBox="0 0 16 16"><circle cx="8" cy="8" r="7.5" fill="#fdfdfd" stroke="#151515" stroke-width=".9"/><path d="M2 8 L5.4 6.3 L7.4 5.1 L9.4 3.2 L11 1.6 C13.6 2.4 15.2 5 15 8 C14.8 10 14.2 11.2 13.2 12 C13.6 9.2 13 7.2 11.6 6.4 L10.2 8.2 L9.2 11 L8.2 13.2 L5.8 13 L7.2 11.8 L7.6 9.6 L6 10 L4.4 9.4 L2.4 9.8 Z" fill="#e61a10"/><circle cx="11.2" cy="7.2" r=".7" fill="#ff8a00"/></svg>
<div class="a" style="left:28px;top:988px;width:1401px;height:26px;background:#3c3f41;"></div>
<div class="a" style="left:28px;top:988px;width:1401px;height:2px;background:#2b2d2f;"></div>
<div class="a" style="left:28px;top:988px;width:2px;height:26px;background:#2b2d2f;"></div>
<div class="a" style="left:29px;top:1012px;width:1400px;height:2px;background:linear-gradient(#4e5153,#6c7072);"></div>
<div class="a" style="left:1428px;top:989px;width:1px;height:25px;background:#7a7f82;"></div>
<div class="a" style="left:1432px;top:988px;width:103px;height:26px;background:#3c3f41;"></div>
<div class="a" style="left:1432px;top:988px;width:103px;height:2px;background:#2b2d2f;"></div>
<div class="a" style="left:1432px;top:988px;width:2px;height:26px;background:#2b2d2f;"></div>
<div class="a" style="left:1433px;top:1012px;width:102px;height:2px;background:linear-gradient(#4e5153,#6c7072);"></div>
<div class="a" style="left:1534px;top:989px;width:1px;height:25px;background:#7a7f82;"></div>
<div class="a" style="left:1538px;top:988px;width:139px;height:26px;background:#3c3f41;"></div>
<div class="a" style="left:1538px;top:988px;width:139px;height:2px;background:#2b2d2f;"></div>
<div class="a" style="left:1538px;top:988px;width:2px;height:26px;background:#2b2d2f;"></div>
<div class="a" style="left:1539px;top:1012px;width:138px;height:2px;background:linear-gradient(#4e5153,#6c7072);"></div>
<div class="a" style="left:1676px;top:989px;width:1px;height:25px;background:#7a7f82;"></div>
<div class="a" style="left:1680px;top:988px;width:207px;height:26px;background:#3c3f41;"></div>
<div class="a" style="left:1680px;top:988px;width:207px;height:2px;background:#2b2d2f;"></div>
<div class="a" style="left:1680px;top:988px;width:2px;height:26px;background:#2b2d2f;"></div>
<div class="a" style="left:1681px;top:1012px;width:206px;height:2px;background:linear-gradient(#4e5153,#6c7072);"></div>
<div class="a" style="left:1886px;top:989px;width:1px;height:25px;background:#7a7f82;"></div>
<div class="a" style="left:1891px;top:988px;width:23px;height:26px;background:#3c3f41;"></div>
<div class="a" style="left:1891px;top:988px;width:23px;height:2px;background:#2b2d2f;"></div>
<div class="a" style="left:1891px;top:988px;width:2px;height:26px;background:#2b2d2f;"></div>
<div class="a" style="left:1892px;top:1012px;width:22px;height:2px;background:linear-gradient(#4e5153,#6c7072);"></div>
<div class="a" style="left:1913px;top:989px;width:1px;height:25px;background:#7a7f82;"></div>
<div class="t" style="left:1436px;top:992px;line-height:20px;color:#bbbbbb">1403741d0</div>
<div class="t" style="left:1545px;top:992px;line-height:20px;color:#bbbbbb">entry</div>
<div class="t" style="left:1686px;top:992px;line-height:20px;color:#bbbbbb;letter-spacing:-0.3px">SUB RSP,0x28</div>
</div>
</body></html>
